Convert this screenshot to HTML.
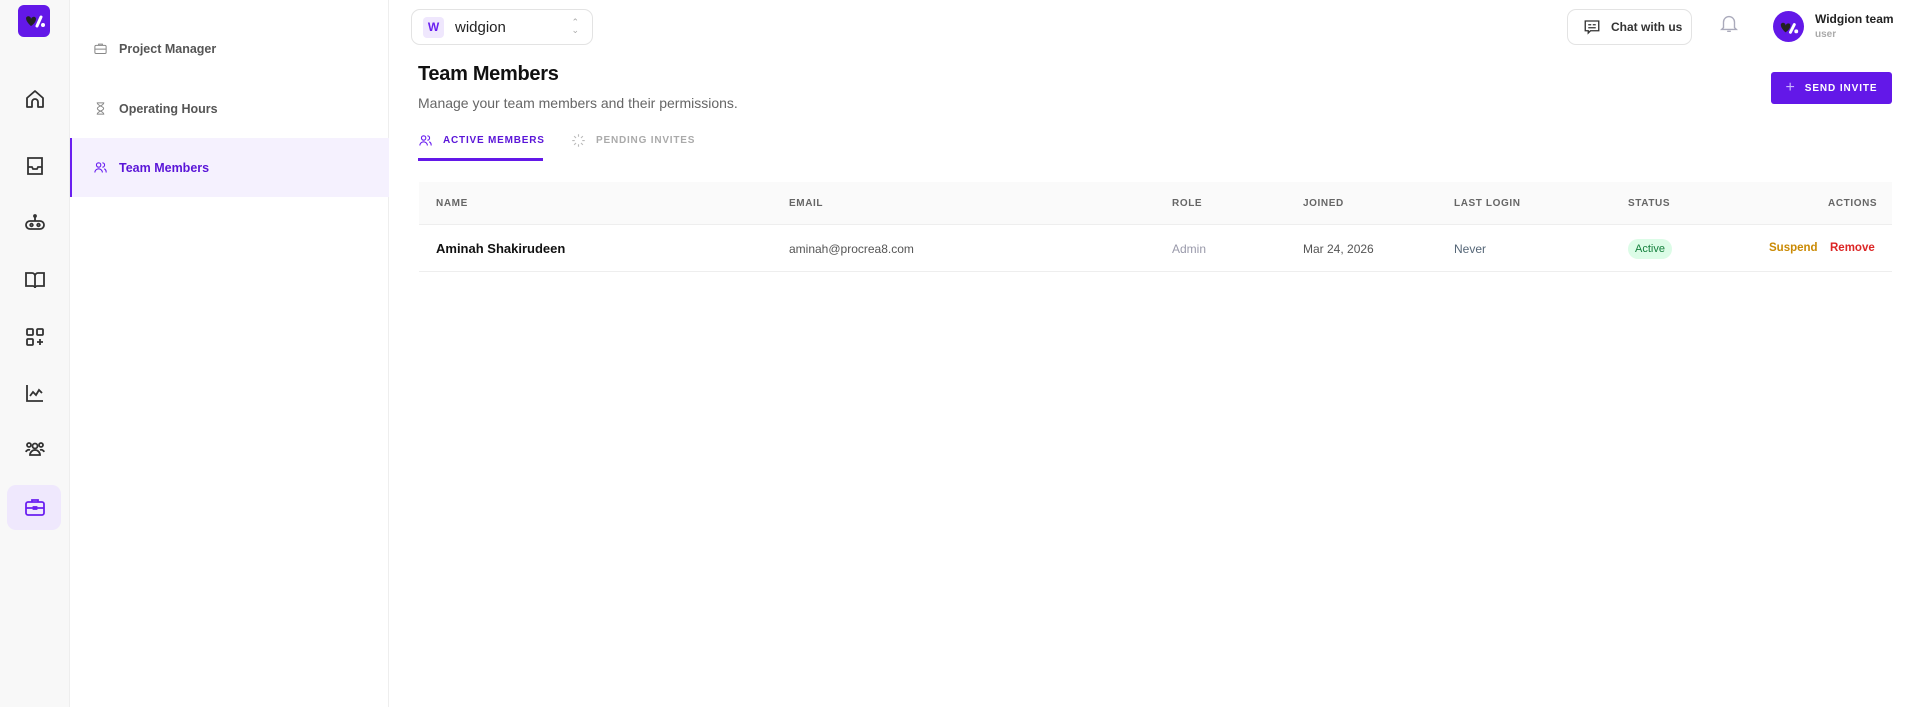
<!DOCTYPE html>
<html><head><meta charset="utf-8"><style>
*{box-sizing:border-box;margin:0;padding:0}
body{width:1919px;height:707px;overflow:hidden;background:#fff;font-family:"Liberation Sans",sans-serif;position:relative;color:#111}
.abs{position:absolute}
.rail{left:0;top:0;width:70px;height:707px;background:#f8f8f8;border-right:1px solid #eee}
.sub{left:70px;top:0;width:319px;height:707px;background:#fff;border-right:1px solid #eee}
.ri{position:absolute;left:23px;width:24px;height:24px}
.si{position:absolute;left:0;width:319px;height:59px;display:flex;align-items:center;font-size:12.5px;font-weight:bold;color:#555}
.si svg{margin-left:23px;margin-right:11px}
.h{position:absolute;top:198px;font-size:10px;font-weight:bold;color:#666;letter-spacing:.6px}
.c{position:absolute;top:242px;font-size:12px}
</style></head><body>
<div class="abs rail">
 <div class="abs" style="left:18px;top:5px;width:32px;height:32px;border-radius:6px;background:#6318e8"><svg width="32" height="32" viewBox="0 0 32 32"><path d="M8 13c1-3 5-2 5 1 1-3 5-3 5 0 0 4-5 7-5 7s-5-4-5-8z" fill="#222"/><path d="M19 21l4-9" stroke="#fff" stroke-width="3" stroke-linecap="round"/><circle cx="25" cy="20" r="2" fill="#fff"/></svg></div>
 <svg class="ri" style="top:87px" viewBox="0 0 24 24" fill="none" stroke="#333" stroke-width="1.8" stroke-linejoin="round"><path d="M4 11l8-7 8 7v9h-5v-5a3 3 0 0 0-6 0v5H4z"/></svg>
 <svg class="ri" style="top:154px" viewBox="0 0 24 24" fill="none" stroke="#333" stroke-width="1.8"><path d="M5 4h14v16H5zM5 13h4l1 2h4l1-2h4"/></svg>
 <svg class="ri" style="top:211px" viewBox="0 0 24 24" fill="none" stroke="#333" stroke-width="1.8"><rect x="3" y="10" width="18" height="8" rx="4"/><circle cx="8.5" cy="14" r="1.3"/><circle cx="15.5" cy="14" r="1.3"/><path d="M12 10V6"/><circle cx="12" cy="5" r="1"/></svg>
 <svg class="ri" style="top:268px" viewBox="0 0 24 24" fill="none" stroke="#333" stroke-width="1.8"><path d="M3 5h6a3 3 0 0 1 3 3v12a2 2 0 0 0-2-2H3zM21 5h-6a3 3 0 0 0-3 3v12a2 2 0 0 1 2-2h7z"/></svg>
 <svg class="ri" style="top:325px" viewBox="0 0 24 24" fill="none" stroke="#333" stroke-width="1.8"><rect x="4" y="4" width="6" height="6" rx="1"/><rect x="14" y="4" width="6" height="6" rx="1"/><rect x="4" y="14" width="6" height="6" rx="1"/><path d="M17 14v6M14 17h6"/></svg>
 <svg class="ri" style="top:381px" viewBox="0 0 24 24" fill="none" stroke="#333" stroke-width="1.8"><path d="M4 4v16h16M7 15l3-4 3 3 3-5 3 3"/></svg>
 <svg class="ri" style="top:437px" viewBox="0 0 24 24" fill="none" stroke="#333" stroke-width="1.8"><circle cx="12" cy="9" r="2.5"/><circle cx="6" cy="8" r="2"/><circle cx="18" cy="8" r="2"/><path d="M7 18a5 5 0 0 1 10 0zM3 15a3 3 0 0 1 4-2M21 15a3 3 0 0 0-4-2"/></svg>
 <div class="abs" style="left:7px;top:485px;width:54px;height:45px;border-radius:9px;background:#efe8fd"></div>
 <svg class="ri" style="top:495px" viewBox="0 0 24 24" fill="none" stroke="#6a1ff0" stroke-width="1.8"><rect x="3" y="7" width="18" height="13" rx="2"/><path d="M9 7V5h6v2M3 13h18"/><rect x="10.5" y="12" width="3" height="2" fill="#6a1ff0"/></svg>
</div>
<div class="abs sub">
 <div class="si" style="top:19px"><svg width="15" height="15" viewBox="0 0 24 24" fill="none" stroke="#888" stroke-width="1.6"><rect x="3" y="7" width="18" height="13" rx="2"/><path d="M9 7V5h6v2M3 13h18"/></svg>Project Manager</div>
 <div class="si" style="top:79px"><svg width="15" height="15" viewBox="0 0 24 24" fill="none" stroke="#888" stroke-width="1.6"><path d="M6 3h12M6 21h12M7 3c0 5 10 5 10 9s-10 4-10 9M17 3c0 5-10 5-10 9s10 4 10 9"/></svg>Operating Hours</div>
 <div class="si" style="top:138px;background:#f5f1fe;border-left:2px solid #6a1ff0;color:#5a15d8"><svg width="15" height="15" viewBox="0 0 24 24" fill="none" stroke="#6a1ff0" stroke-width="1.8" style="margin-left:21px"><circle cx="9" cy="8" r="3.5"/><path d="M3 20a6 6 0 0 1 12 0M15 4.5a3.5 3.5 0 0 1 0 7M18 14a6 6 0 0 1 3 6"/></svg>Team Members</div>
</div>
<div class="abs" style="left:411px;top:9px;width:182px;height:36px;border:1px solid #e3e3e3;border-radius:9px;display:flex;align-items:center">
 <div style="margin-left:11px;width:21px;height:21px;border-radius:4px;background:#efe7fd;color:#6a1ff0;font-weight:bold;font-size:12px;text-align:center;line-height:21px">W</div>
 <span style="margin-left:11px;font-size:15px;color:#222">widgion</span>
 <span style="position:absolute;right:13px;top:8px;color:#aaa;font-size:9px;line-height:8px">⌃<br>⌄</span>
</div>
<div class="abs" style="left:1567px;top:9px;width:125px;height:36px;border:1px solid #e3e3e3;border-radius:9px;display:flex;align-items:center;font-size:12px;font-weight:bold;color:#333">
 <svg width="18" height="18" viewBox="0 0 24 24" fill="none" stroke="#333" stroke-width="1.8" style="margin:0 10px 0 15px"><path d="M3 4h18v13H10l-3 3v-3H3z"/><path d="M7 9h4M13 9h4M7 13h10"/></svg>Chat with us</div>
<svg class="abs" style="left:1718px;top:12px" width="22" height="22" viewBox="0 0 24 24" fill="none" stroke="#aab" stroke-width="1.5"><path d="M6 17V11a6 6 0 0 1 12 0v6l2 2H4zM10 21h4"/></svg>
<div class="abs" style="left:1773px;top:11px;width:31px;height:31px;border-radius:50%;background:#6318e8"><svg width="31" height="31" viewBox="0 0 32 32"><path d="M8 14c1-3 5-2 5 1 1-3 5-3 5 0 0 4-5 7-5 7s-5-4-5-8z" fill="#222"/><path d="M18 22l4-8" stroke="#fff" stroke-width="3" stroke-linecap="round"/><circle cx="24" cy="21" r="2" fill="#fff"/></svg></div>
<div class="abs" style="left:1815px;top:12px;font-size:12px;font-weight:bold;color:#222">Widgion team</div>
<div class="abs" style="left:1815px;top:29px;font-size:10px;font-weight:bold;color:#aaa">user</div>
<div class="abs" style="left:418px;top:63px;font-size:20px;font-weight:bold;color:#111;letter-spacing:-.3px">Team Members</div>
<div class="abs" style="left:418px;top:95px;font-size:14px;color:#666">Manage your team members and their permissions.</div>
<div class="abs" style="left:1771px;top:72px;width:121px;height:32px;border-radius:3px;background:#6318e8;color:#fff;font-size:10px;font-weight:bold;letter-spacing:.9px;display:flex;align-items:center;justify-content:center"><span style="font-size:16px;font-weight:normal;color:#c9b4ff;margin-right:9px">+</span>SEND INVITE</div>
<div class="abs" style="left:418px;top:133px;font-size:10px;font-weight:bold;letter-spacing:.8px;color:#5a15d8;display:flex;align-items:center"><svg width="15" height="15" viewBox="0 0 24 24" fill="none" stroke="#6a1ff0" stroke-width="1.8" style="margin-right:10px"><circle cx="9" cy="8" r="3.5"/><path d="M3 20a6 6 0 0 1 12 0M15 4.5a3.5 3.5 0 0 1 0 7M18 14a6 6 0 0 1 3 6"/></svg>ACTIVE MEMBERS</div>
<div class="abs" style="left:418px;top:158px;width:125px;height:3px;background:#6318e8"></div>
<div class="abs" style="left:571px;top:133px;font-size:10px;font-weight:bold;letter-spacing:.8px;color:#aaa;display:flex;align-items:center"><svg width="15" height="15" viewBox="0 0 24 24" stroke="#bbb" stroke-width="1.8" style="margin-right:10px"><path d="M12 2v4M12 18v4M2 12h4M18 12h4M5 5l3 3M16 16l3 3M5 19l3-3M16 8l3-3"/></svg>PENDING INVITES</div>
<div class="abs" style="left:419px;top:182px;width:1473px;height:43px;background:#fafafa;border-bottom:1px solid #eee"></div>
<div class="abs" style="left:419px;top:271px;width:1473px;height:1px;background:#eee"></div>
<div class="h" style="left:436px">NAME</div><div class="h" style="left:789px">EMAIL</div><div class="h" style="left:1172px">ROLE</div><div class="h" style="left:1303px">JOINED</div><div class="h" style="left:1454px">LAST LOGIN</div><div class="h" style="left:1628px">STATUS</div><div class="h" style="left:1828px">ACTIONS</div>
<div class="c" style="left:436px;font-weight:bold;font-size:13px;color:#111;top:241px">Aminah Shakirudeen</div>
<div class="c" style="left:789px;color:#555">aminah@procrea8.com</div>
<div class="c" style="left:1172px;color:#99a">Admin</div>
<div class="c" style="left:1303px;color:#555">Mar 24, 2026</div>
<div class="c" style="left:1454px;color:#567">Never</div>
<div class="abs" style="left:1628px;top:239px;width:44px;height:20px;border-radius:10px;background:#dcfce7;color:#15803d;font-size:11px;text-align:center;line-height:20px">Active</div>
<div class="c" style="left:1769px;color:#ca8a04;font-weight:bold;font-size:11.5px">Suspend</div>
<div class="c" style="left:1830px;color:#dc2626;font-weight:bold;font-size:11.5px">Remove</div>
</body></html>
